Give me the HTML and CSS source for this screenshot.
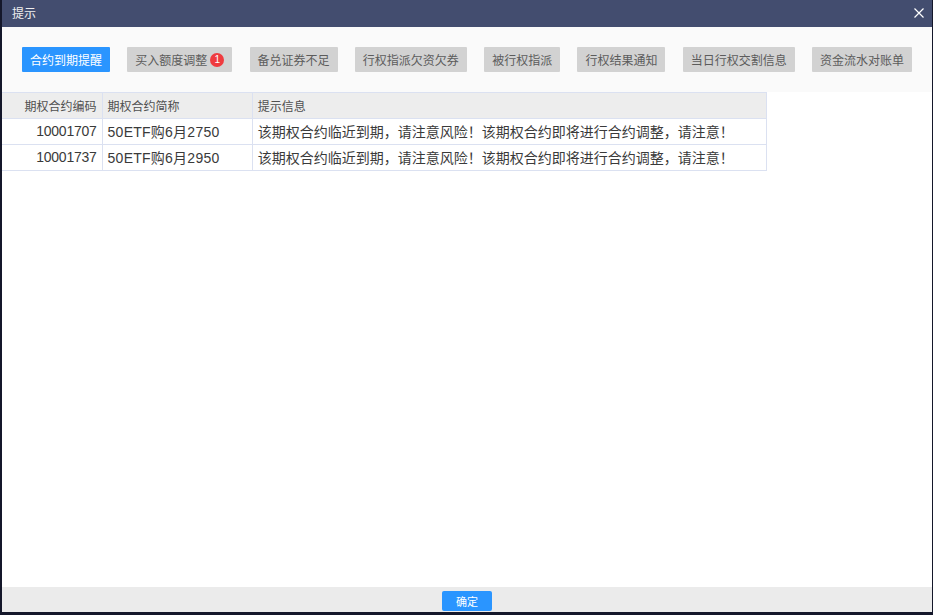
FILE: index.html
```html
<!DOCTYPE html>
<html lang="zh-CN">
<head>
<meta charset="utf-8">
<title>提示</title>
<link rel="stylesheet" href="styles.css">
</head>
<body>
<div class="dialog">
  <header class="title-bar">
    <span class="title">提示</span>
    <svg class="close" width="10" height="10" viewBox="0 0 10 10" aria-label="关闭"><path d="M.5.5l9 9M9.5.5l-9 9" stroke="#fff" stroke-width="1.2" fill="none"/></svg>
  </header>
  <nav class="tabs">
    <span class="tab active">合约到期提醒</span>
    <span class="tab">买入额度调整<span class="badge">1</span></span>
    <span class="tab">备兑证券不足</span>
    <span class="tab">行权指派欠资欠券</span>
    <span class="tab">被行权指派</span>
    <span class="tab">行权结果通知</span>
    <span class="tab">当日行权交割信息</span>
    <span class="tab">资金流水对账单</span>
  </nav>
  <main class="content">
    <table class="grid">
      <thead>
        <tr><th class="col-code">期权合约编码</th><th class="col-name">期权合约简称</th><th class="col-msg">提示信息</th></tr>
      </thead>
      <tbody>
        <tr><td class="col-code">10001707</td><td class="col-name">50ETF购6月2750</td><td class="col-msg">该期权合约临近到期，请注意风险！该期权合约即将进行合约调整，请注意！</td></tr>
        <tr><td class="col-code">10001737</td><td class="col-name">50ETF购6月2950</td><td class="col-msg">该期权合约临近到期，请注意风险！该期权合约即将进行合约调整，请注意！</td></tr>
      </tbody>
    </table>
  </main>
  <footer class="footer"><button class="ok">确定</button></footer>
</div>
</body>
</html>
```
FILE: styles.css
```css
* { box-sizing: border-box; }
html, body { height: 100%; }
body {
  margin: 0;
  background: #14172a;
  font-family: "Noto Sans CJK SC", "Liberation Sans", sans-serif;
  overflow: hidden;
}
.dialog {
  width: 930px;
  height: 612px;
  margin-left: 2px;
  background: #fff;
  display: flex;
  flex-direction: column;
}
.title-bar {
  flex: none;
  height: 27px;
  background: #434d6f;
  color: #f0f0f0;
  display: flex;
  align-items: center;
  justify-content: space-between;
  padding: 0 8px 2px 10px;
}
.title { font-size: 12px; line-height: 20px; }
.tabs {
  flex: none;
  height: 65px;
  background: #fafafa;
  padding: 20px 20px 0;
  display: flex;
  justify-content: space-between;
  align-items: flex-start;
}
.tab {
  height: 25px;
  padding: 0 8px;
  background: #d2d2d2;
  color: #5c5c5c;
  font-size: 12px;
  line-height: 25px;
  border-radius: 1px;
  display: flex;
  align-items: center;
  white-space: nowrap;
}
.tab.active { background: #2a95ff; color: #fff; }
.badge {
  width: 14px;
  height: 14px;
  margin-left: 3px;
  border-radius: 50%;
  background: #ef3b3f;
  color: #fff;
  font-family: "Liberation Sans", sans-serif;
  font-size: 10px;
  line-height: 14px;
  text-align: center;
}
.content { flex: 1; min-height: 0; }
.grid {
  border-collapse: collapse;
  table-layout: fixed;
  width: 765px;
  color: #3a3a3a;
}
.grid th, .grid td {
  height: 26px;
  padding: 0 5px;
  border: 1px solid #dbe1f1;
  white-space: nowrap;
  overflow: hidden;
}
.grid th {
  background: #ededed;
  font-size: 12px;
  font-weight: normal;
  color: #505050;
  text-align: left;
}
.grid td {
  font-family: "Liberation Sans", "Noto Sans CJK SC", sans-serif;
  font-size: 14px;
  padding-bottom: 2px;
}
.grid tr > :first-child { border-left: 0; }
.col-code { width: 100px; }
.grid .col-code { text-align: right; }
.grid td.col-code { letter-spacing: -0.25px; }
.col-name { width: 150px; }
.grid td.col-name { letter-spacing: 0.25px; }
.col-msg { width: 514px; }
.footer {
  flex: none;
  height: 25px;
  background: #ebebeb;
  display: flex;
  justify-content: center;
  align-items: flex-start;
}
.ok {
  width: 50px;
  height: 20px;
  margin-top: 4px;
  padding: 0 0 1px;
  border: 0;
  border-radius: 2px;
  background: #2a95ff;
  color: #fff;
  font: 11px/18px "Noto Sans CJK SC", sans-serif;
}
```
